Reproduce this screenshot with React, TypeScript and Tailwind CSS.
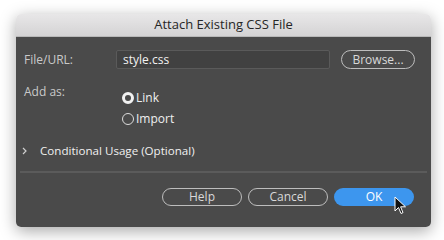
import React from 'react';

function Radio({ checked, label }: { checked?: boolean; label: string }) {
  return (
    <div className="flex items-center gap-[2px] h-[21px]">
      {checked ? (
        <span className="w-[12px] h-[12px] rounded-full border-[3px] border-[#f2f2f2] bg-[#4a4a4a]" />
      ) : (
        <span className="w-[12px] h-[12px] rounded-full border border-[#dcdcdc] bg-[#4a4a4a]" />
      )}
      <span className="text-[12px] text-[#f0f0f0] font-medium">{label}</span>
    </div>
  );
}

function PillButton({ children, primary }: { children: React.ReactNode; primary?: boolean }) {
  return (
    <button
      className={
        primary
          ? 'w-[80px] h-[18px] rounded-full bg-[#3d96ee] text-white text-[12px] font-medium flex items-center justify-center'
          : 'w-[80px] h-[18px] rounded-full border border-[#bdbdbd] text-[#d9d9d9] text-[12px] font-medium flex items-center justify-center'
      }
    >
      {children}
    </button>
  );
}

export default function App() {
  return (
    <div
      className="w-[444px] h-[240px] bg-white pt-[14px] pl-[16px] overflow-hidden relative"
      style={{ fontFamily: '"Open Sans", "Noto Sans", sans-serif' }}
    >
      <div className="w-[415px] h-[213px] rounded-[5px] overflow-hidden flex flex-col shadow-[0_4px_16px_rgba(0,0,0,0.35)]">
        {/* Title bar */}
        <div className="h-[23px] bg-gradient-to-b from-[#e8e7e8] to-[#d4d3d4] border-b border-[#b9b9b9] flex items-center justify-center">
          <span className="text-[13px] text-[#262626]">Attach Existing CSS File</span>
        </div>

        {/* Body */}
        <div className="flex-1 bg-[#4a4a4a] flex flex-col pt-[13px]">
          <div className="flex items-center h-[19px] pl-[8px]">
            <span className="w-[92px] text-[12px] text-[#c9c9c9]">File/URL:</span>
            <div className="w-[214px] h-[19px] bg-[#414141] border border-[#5a5a5a] rounded-[2px] flex items-center pl-[6px]">
              <span className="text-[12px] text-[#f2f2f2] font-medium">style.css</span>
            </div>
            <button className="ml-[11px] w-[74px] h-[19px] rounded-full border border-[#bdbdbd] text-[#d9d9d9] text-[12px] font-medium flex items-center justify-center">
              Browse...
            </button>
          </div>

          <div className="flex pl-[8px] mt-[18px]">
            <span className="w-[98px] text-[12px] text-[#c9c9c9] leading-[16px] -mt-[3px]">Add as:</span>
            <div className="flex flex-col">
              <Radio checked label="Link" />
              <Radio label="Import" />
            </div>
          </div>

          <div className="flex items-center h-[20px] mt-[12px] pl-[5px]">
            <svg width="6" height="8" viewBox="0 0 6 8" className="ml-[1px]">
              <path d="M1 1 L4 4 L1 7" stroke="#cfcfcf" strokeWidth="1.2" fill="none" />
            </svg>
            <span className="ml-[12px] text-[11.6px] text-[#f0f0f0] font-medium">Conditional Usage (Optional)</span>
          </div>

          <div className="mx-[4px] mt-[10px] h-[2px] bg-[#5b5b5b]" />

          <div className="flex justify-end gap-[6px] pr-[17px] mt-[15px]">
            <PillButton>Help</PillButton>
            <PillButton>Cancel</PillButton>
            <PillButton primary>OK</PillButton>
          </div>
        </div>
      </div>

      {/* mouse cursor */}
      <svg width="14" height="20" viewBox="0 0 14 20" className="absolute left-[394px] top-[196px]">
        <path d="M1 1 L1 15 L4.5 11.5 L7 17.5 L9 16.6 L6.6 10.8 L11.5 10.8 Z" fill="#111" stroke="#fff" strokeWidth="1" strokeLinejoin="round" />
      </svg>
    </div>
  );
}
